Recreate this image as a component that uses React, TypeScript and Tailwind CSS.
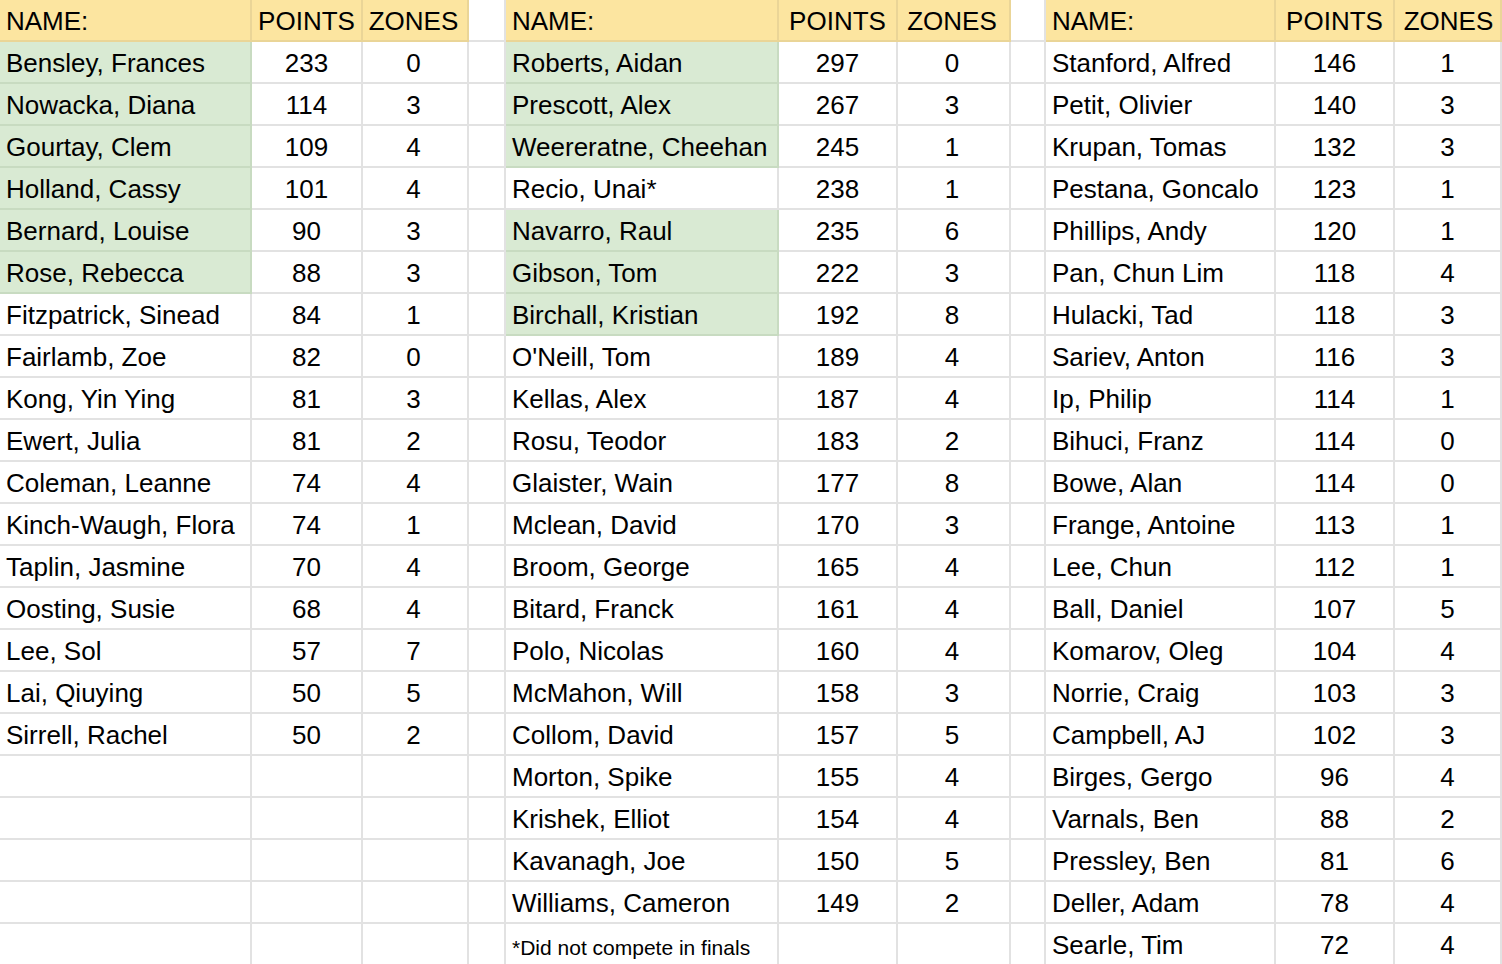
type Row = [string, number, number, boolean?]

const left: Row[] = [
  ['Bensley, Frances', 233, 0, true],
  ['Nowacka, Diana', 114, 3, true],
  ['Gourtay, Clem', 109, 4, true],
  ['Holland, Cassy', 101, 4, true],
  ['Bernard, Louise', 90, 3, true],
  ['Rose, Rebecca', 88, 3, true],
  ['Fitzpatrick, Sinead', 84, 1],
  ['Fairlamb, Zoe', 82, 0],
  ['Kong, Yin Ying', 81, 3],
  ['Ewert, Julia', 81, 2],
  ['Coleman, Leanne', 74, 4],
  ['Kinch-Waugh, Flora', 74, 1],
  ['Taplin, Jasmine', 70, 4],
  ['Oosting, Susie', 68, 4],
  ['Lee, Sol', 57, 7],
  ['Lai, Qiuying', 50, 5],
  ['Sirrell, Rachel', 50, 2],
]

const middle: Row[] = [
  ['Roberts, Aidan', 297, 0, true],
  ['Prescott, Alex', 267, 3, true],
  ['Weereratne, Cheehan', 245, 1, true],
  ['Recio, Unai*', 238, 1],
  ['Navarro, Raul', 235, 6, true],
  ['Gibson, Tom', 222, 3, true],
  ['Birchall, Kristian', 192, 8, true],
  ["O'Neill, Tom", 189, 4],
  ['Kellas, Alex', 187, 4],
  ['Rosu, Teodor', 183, 2],
  ['Glaister, Wain', 177, 8],
  ['Mclean, David', 170, 3],
  ['Broom, George', 165, 4],
  ['Bitard, Franck', 161, 4],
  ['Polo, Nicolas', 160, 4],
  ['McMahon, Will', 158, 3],
  ['Collom, David', 157, 5],
  ['Morton, Spike', 155, 4],
  ['Krishek, Elliot', 154, 4],
  ['Kavanagh, Joe', 150, 5],
  ['Williams, Cameron', 149, 2],
]

const right: Row[] = [
  ['Stanford, Alfred', 146, 1],
  ['Petit, Olivier', 140, 3],
  ['Krupan, Tomas', 132, 3],
  ['Pestana, Goncalo', 123, 1],
  ['Phillips, Andy', 120, 1],
  ['Pan, Chun Lim', 118, 4],
  ['Hulacki, Tad', 118, 3],
  ['Sariev, Anton', 116, 3],
  ['Ip, Philip', 114, 1],
  ['Bihuci, Franz', 114, 0],
  ['Bowe, Alan', 114, 0],
  ['Frange, Antoine', 113, 1],
  ['Lee, Chun', 112, 1],
  ['Ball, Daniel', 107, 5],
  ['Komarov, Oleg', 104, 4],
  ['Norrie, Craig', 103, 3],
  ['Campbell, AJ', 102, 3],
  ['Birges, Gergo', 96, 4],
  ['Varnals, Ben', 88, 2],
  ['Pressley, Ben', 81, 6],
  ['Deller, Adam', 78, 4],
  ['Searle, Tim', 72, 4],
]

const ROWS = 22

const base = 'h-[42px] pt-[2px] border-r-2 border-b-2 flex items-center overflow-hidden whitespace-nowrap'
const plain = `${base} border-[#e2e2e2] bg-white`
const head = `${base} border-[#ead597] bg-[#fce5a0]`
const green = `${base} border-[#c8dbc1] bg-[#d9ead3]`

function HeaderGroup({ last }: { last?: boolean }) {
  return (
    <>
      <div className={`${head} pl-[6px]`}>NAME:</div>
      <div className={`${head} justify-center`}>POINTS</div>
      <div className={`${head} justify-center ${last ? 'border-r-0 pl-[2px]' : 'pr-[3px]'}`}>ZONES</div>
    </>
  )
}

function Group({ row, note, last }: { row?: Row; note?: string; last?: boolean }) {
  const nameCls = row?.[3] ? green : plain
  return (
    <>
      <div className={`${nameCls} pl-[6px]`}>
        {note ? <span className="text-[21px] mt-[5px]">{note}</span> : row?.[0]}
      </div>
      <div className={`${plain} justify-center`}>{row?.[1]}</div>
      <div className={`${plain} justify-center ${last ? 'border-r-0' : 'pr-[3px]'}`}>{row?.[2]}</div>
    </>
  )
}

export default function App() {
  return (
    <div className="w-[1502px] h-[964px] overflow-hidden bg-white text-black">
      <div
        className="grid grid-cols-[252px_111px_106px_37px_273px_119px_113px_35px_230px_119px_107px] text-[26px] leading-none"
        style={{ fontFamily: '"Liberation Sans", Arial, sans-serif' }}
      >
        <HeaderGroup />
        <div className={plain} />
        <HeaderGroup />
        <div className={plain} />
        <HeaderGroup last />
        {Array.from({ length: ROWS }).map((_, i) => (
          <div key={i} className="contents">
            <Group row={left[i]} />
            <div className={plain} />
            <Group row={middle[i]} note={i === middle.length ? '*Did not compete in finals' : undefined} />
            <div className={plain} />
            <Group row={right[i]} last />
          </div>
        ))}
      </div>
    </div>
  )
}
